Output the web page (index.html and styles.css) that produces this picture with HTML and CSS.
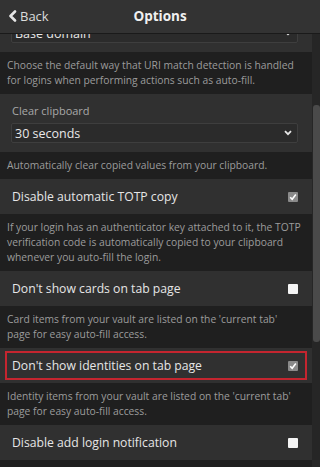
FILE: index.html
```html
<!DOCTYPE html>
<html lang="en">
<head>
    <meta charset="UTF-8">
    <meta name="viewport" content="width=device-width, initial-scale=1.0">
    <title>Options</title>
    <link rel="stylesheet" href="styles.css">
</head>
<body>
    <!-- Header -->
    <header class="header">
        <a class="back" href="#">
            <svg class="back-icon" width="9" height="12" viewBox="0 0 9 12">
                <path d="M7 1.5 L2.5 6 L7 10.5" fill="none" stroke="#e6e6e6" stroke-width="2.6" stroke-linecap="round" stroke-linejoin="round"/>
            </svg>
            <span>Back</span>
        </a>
        <h1 class="title">Options</h1>
    </header>

    <div class="viewport">
        <main class="content">

            <!-- URI match detection -->
            <div class="box">
                <div class="label">Default URI match detection</div>
                <div class="select">
                    <span>Base domain</span>
                    <svg width="8" height="6" viewBox="0 0 8 6"><path d="M1 1.2 L4 4.2 L7 1.2" fill="none" stroke="#e6e6e6" stroke-width="1.8"/></svg>
                </div>
            </div>
            <div class="desc">Choose the default way that URI match detection is handled for logins when performing actions such as auto-fill.</div>

            <!-- Clear clipboard -->
            <div class="box">
                <div class="label">Clear clipboard</div>
                <div class="select">
                    <span>30 seconds</span>
                    <svg width="8" height="6" viewBox="0 0 8 6"><path d="M1 1.2 L4 4.2 L7 1.2" fill="none" stroke="#e6e6e6" stroke-width="1.8"/></svg>
                </div>
            </div>
            <div class="desc">Automatically clear copied values from your clipboard.</div>

            <!-- Toggles -->
            <div class="row">
                <div class="row-inner">
                    <span class="row-label">Disable automatic TOTP copy</span>
                    <span class="check checked"><svg width="8" height="8" viewBox="0 0 8 8"><path d="M1.2 4.2 L3.2 6.2 L6.8 1.6" fill="none" stroke="#fff" stroke-width="1.6"/></svg></span>
                </div>
            </div>
            <div class="desc">If your login has an authenticator key attached to it, the TOTP verification code is automatically copied to your clipboard whenever you auto-fill the login.</div>

            <div class="row">
                <div class="row-inner">
                    <span class="row-label">Don't show cards on tab page</span>
                    <span class="check"></span>
                </div>
            </div>
            <div class="desc">Card items from your vault are listed on the 'current tab'<br>page for easy auto-fill access.</div>

            <div class="row">
                <div class="row-inner highlight">
                    <span class="row-label">Don't show identities on tab page</span>
                    <span class="check checked"><svg width="8" height="8" viewBox="0 0 8 8"><path d="M1.2 4.2 L3.2 6.2 L6.8 1.6" fill="none" stroke="#fff" stroke-width="1.6"/></svg></span>
                </div>
            </div>
            <div class="desc">Identity items from your vault are listed on the 'current tab' page for easy auto-fill access.</div>

            <div class="row">
                <div class="row-inner">
                    <span class="row-label">Disable add login notification</span>
                    <span class="check"></span>
                </div>
            </div>
            <div class="desc">The "Add Login Notification" automatically prompts you to save new logins to your vault whenever you log into them for the first time.</div>

        </main>

        <!-- Scrollbar -->
        <div class="scrollbar">
            <div class="thumb"></div>
        </div>
    </div>
</body>
</html>
```

FILE: styles.css
```css
body {
    margin: 0;
    background-color: #1f1f1f;
    font-family: "Open Sans", "Noto Sans", sans-serif;
    color: #e0e0e0;
    height: 467px;
    overflow: hidden;
}

/* Header */
.header {
    height: 33px;
    background-color: #333333;
    border-bottom: 1px solid #1a1a1a;
    display: flex;
    align-items: center;
    justify-content: center;
    position: relative;
}

.back {
    position: absolute;
    left: 8px;
    top: 0;
    height: 31px;
    display: flex;
    align-items: center;
    gap: 3px;
    color: #dcdcdc;
    text-decoration: none;
    font-size: 13px;
}

.title {
    margin: 0 0 2px;
    font-size: 13.5px;
    font-weight: 700;
    color: #f0f0f0;
}

/* Scrolled area */
.viewport {
    display: flex;
    height: 433px;
    overflow: hidden;
}

.content {
    width: 312px;
    margin-top: -40px;
}

.scrollbar {
    width: 8px;
    background-color: #262626;
    padding-top: 71px;
}

.thumb {
    width: 7px;
    margin-left: 1px;
    height: 237px;
    background-color: #4a4a4a;
    border-radius: 3px;
}

/* Select boxes */
.box {
    background-color: #303030;
    padding: 8px 14px 9px 11px;
}

.label {
    font-size: 11px;
    line-height: 18px;
    color: #a8a8a8;
    margin-bottom: 3px;
    padding-left: 1px;
}

.select {
    height: 18px;
    border: 1px solid #3e3e3e;
    border-radius: 2px;
    background-color: #2b2b2b;
    display: flex;
    align-items: center;
    justify-content: space-between;
    padding: 0 5px 0 3px;
    font-size: 12.5px;
    color: #e8e8e8;
}

/* Descriptions */
.desc {
    padding: 6px 3px 6px 7px;
    font-size: 10.3px;
    line-height: 15px;
    color: #9c9c9c;
}

/* Checkbox rows */
.row {
    background-color: #303030;
    padding: 3px 5px;
}

.row-inner {
    border: 2px solid transparent;
    padding: 3px 7px 3px 5px;
    display: flex;
    align-items: center;
    justify-content: space-between;
}

.row-inner.highlight {
    border-color: #c4252f;
}

.row-label {
    font-size: 12.2px;
    line-height: 19px;
    color: #e6e6e6;
}

.check {
    width: 10px;
    height: 10px;
    border-radius: 1px;
    background-color: #f4f4f4;
    display: flex;
    align-items: center;
    justify-content: center;
}

.check.checked {
    background-color: #8a8a8a;
}
```
